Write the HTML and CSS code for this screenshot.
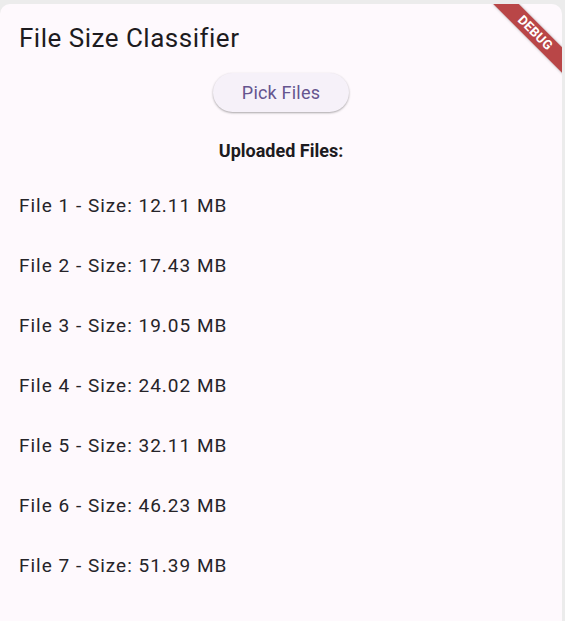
FILE: index.html
```html
<!DOCTYPE html>
<html>
<head>
<meta charset="utf-8">
<link rel="stylesheet" href="styles.css">
</head>
<body>
<div class="panel">
  <header class="appbar"><h1 class="title">File Size Classifier</h1></header>
  <main class="content">
    <button class="pick">Pick Files</button>
    <div class="heading">Uploaded Files:</div>
    <ul class="files">
      <li>File 1 - Size: 12.11 MB</li>
      <li>File 2 - Size: 17.43 MB</li>
      <li>File 3 - Size: 19.05 MB</li>
      <li>File 4 - Size: 24.02 MB</li>
      <li>File 5 - Size: 32.11 MB</li>
      <li>File 6 - Size: 46.23 MB</li>
      <li>File 7 - Size: 51.39 MB</li>
    </ul>
  </main>
  <div class="debug">DEBUG</div>
</div>
</body>
</html>
```
FILE: styles.css
```css
html, body {
  margin: 0;
  padding: 0;
  height: 100%;
}
body {
  background: #ececec;
  font-family: Roboto, "Noto Sans", sans-serif;
  overflow: hidden;
}
.panel {
  position: relative;
  margin: 4px 3px 0 0;
  height: 640px;
  background: #fef9fd;
  border-radius: 10px 10px 0 0;
  overflow: hidden;
}
.appbar {
  height: 64px;
  display: flex;
  align-items: center;
  padding-left: 19px;
  padding-top: 3px;
  box-sizing: border-box;
}
.title {
  margin: 0;
  font-size: 26px;
  font-weight: 400;
  letter-spacing: 0.5px;
  color: #1d1b20;
}
.content {
  display: flex;
  flex-direction: column;
  align-items: center;
}
.pick {
  margin-top: 5px;
  width: 136px;
  height: 39px;
  border: none;
  border-radius: 20px;
  background: #f6f1f9;
  color: #65558f;
  font-family: Roboto, sans-serif;
  font-size: 18px;
  letter-spacing: 0.2px;
  box-shadow: 0 1px 2px rgba(0,0,0,0.25), 0 1px 3px rgba(0,0,0,0.1);
}
.heading {
  margin-top: 28px;
  font-size: 18px;
  font-weight: 700;
  color: #1d1b20;
}
.files {
  list-style: none;
  margin: 14px 0 0 0;
  padding: 0;
  align-self: stretch;
}
.files li {
  height: 60px;
  display: flex;
  align-items: center;
  padding-left: 19px;
  font-size: 19px;
  letter-spacing: 1px;
  color: #262429;
}
.debug {
  position: absolute;
  top: 20px;
  left: 485px;
  width: 100px;
  height: 18px;
  transform: rotate(45deg);
  background: rgba(170, 30, 30, 0.82);
  color: #fff;
  font-size: 13px;
  font-weight: 700;
  line-height: 18px;
  text-align: center;
  letter-spacing: 0.3px;
  box-shadow: 0 0 3px rgba(0,0,0,0.3);
}
```
